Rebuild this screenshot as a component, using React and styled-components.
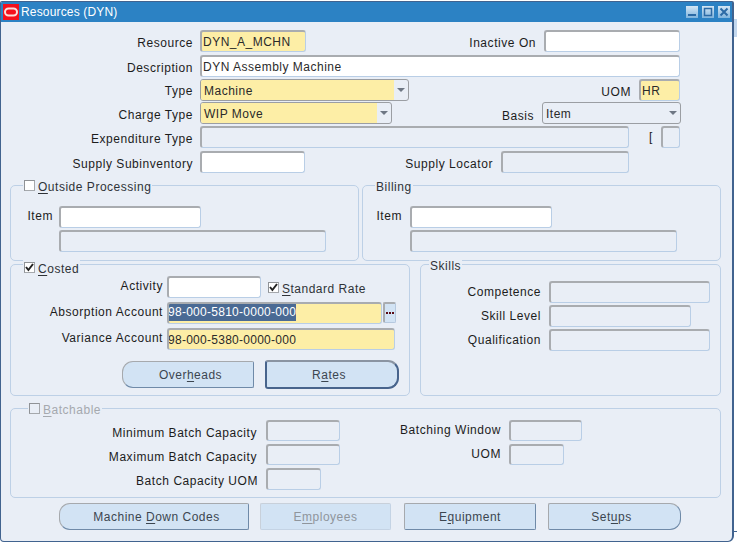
import React from "react";
import styled, { createGlobalStyle } from "styled-components";

const Global = createGlobalStyle`
  html, body { margin: 0; padding: 0; background: #fff; }
  body { font-family: "Liberation Sans", Arial, sans-serif; font-size: 12px; color: #1a1a1a; }
`;

const Page = styled.div`
  width: 737px; height: 544px; box-sizing: border-box; padding: 1px 0 0 0; overflow: hidden; display: flex;
`;
const Win = styled.div`
  width: 734px; height: 541px; flex: none; box-sizing: border-box;
  border: 1px solid #41638f; border-right-width: 2px;
  border-radius: 2px 2px 6px 4px; background: #e9eef6; display: flex; flex-direction: column; overflow: hidden;
`;
const Edge = styled.div`
  flex: 1; display: flex; flex-direction: column; padding-top: 18px;
`;
const EdgeTab = styled.div` height: 18px; background: #c4d8ee; `;
const EdgeLine = styled.div` height: 1px; margin-top: 494px; background: #41638f; `;
const TitleBar = styled.div`
  height: 20px; flex: none; background: #2c82c4; color: #fff; display: flex; align-items: center;
  font-size: 12px; letter-spacing: 0.16px; padding-left: 2px;
`;
const Logo = styled.svg` width: 16px; height: 16px; flex: none; margin-right: 2px; `;
const WinButtons = styled.div` margin-left: auto; display: flex; gap: 4px; padding-right: 2px; `;
const WinBtn = styled.svg` width: 12px; height: 12px; display: block; `;

const Body = styled.div`
  flex: 1; display: flex; flex-direction: column; padding: 8px 0 0 9px;
`;
const Row = styled.div`
  display: flex; align-items: flex-start; height: ${p => p.$h || 22}px; margin-top: ${p => p.$mt || 0}px;
`;
const Label = styled.label`
  flex: none; width: ${p => p.$w}px; margin-right: ${p => p.$gap ?? 8}px; text-align: right;
  white-space: nowrap; line-height: ${p => 22 + 2 * (p.$dy ?? 2)}px; font-size: 12px; letter-spacing: 0.55px; color: #1c1c1c;
`;
const Field = styled.div`
  flex: none; box-sizing: border-box; width: ${p => p.$w}px; height: ${p => p.$h || 22}px; margin-left: ${p => p.$ml || 0}px;
  background: ${p => (p.$tone === "req" ? "#fdeea6" : p.$tone === "ro" ? "#e9eef6" : "#ffffff")};
  border: 1px solid #b9cee6; border-top: 2px solid #a9acb0; border-left: 2px solid #a9acb0; border-radius: 3px;
  padding-left: 1px; font-size: 12px; letter-spacing: 0.5px; line-height: 20px; white-space: nowrap; overflow: hidden;
  color: #2a2a2a;
`;
const SelectBox = styled.div`
  flex: none; box-sizing: border-box; width: ${p => p.$w}px; height: 22px;
  border: 1px solid #9b9ea3; border-radius: 3px; display: flex; background: #e9eef6; overflow: hidden;
`;
const SelectValue = styled.div`
  flex: 1; background: ${p => (p.$plain ? "transparent" : "#fdeea6")}; padding-left: 3px; letter-spacing: 0.5px; line-height: 22px; color: #2a2a2a;
`;
const SelectArrow = styled.div`
  flex: none; width: 14px; position: relative;
  &::after { content: ""; position: absolute; left: 3px; top: 8px; border-left: 4px solid transparent; border-right: 4px solid transparent; border-top: 4px solid #6e7784; }
`;
const Bracket = styled.span` flex: none; width: 12px; margin-left: 20px; line-height: 22px; `;
const Selected = styled.span`
  display: inline-block; margin-left: -2px; background: #4a6a94; color: #fff; letter-spacing: 0.27px; line-height: 17px; vertical-align: top;
`;
const Account = styled.span` margin-left: -2px; letter-spacing: 0.27px; `;
const RateText = styled.span` letter-spacing: 0.5px; line-height: 26px; color: #2f3338; `;

const Two = styled.div` display: flex; margin-top: ${p => p.$mt || 0}px; `;
const Group = styled.div`
  flex: none; box-sizing: border-box; width: ${p => p.$w}px; height: ${p => p.$h}px; margin-left: ${p => p.$ml || 0}px;
  border: 1px solid #bdd0e6; border-radius: 5px; position: relative; display: flex; flex-direction: column;
  padding-top: ${p => p.$pt || 0}px;
`;
const Legend = styled.div`
  position: absolute; left: ${p => p.$l ?? 12}px; top: ${p => p.$t ?? -8}px; background: #e9eef6; display: flex; align-items: center;
  height: 15px; padding: 0 1px; letter-spacing: 0.52px; color: ${p => (p.$off ? "#a5a9ae" : "#2f3338")};
`;
const LegendText = styled.span` padding-top: ${p => p.$dy ?? 2}px; `;
const Check = styled.span`
  flex: none; box-sizing: border-box; width: 11px; height: 11px; border: 1px solid #a5a8ac; border-top-color: #8f9296; border-left-color: #8f9296;
  background: ${p => (p.$off ? "#e9eef6" : "#fff")}; margin: ${p => p.$mt || 0}px 3px 0 ${p => p.$ml || 0}px; display: inline-flex;
  align-items: center; justify-content: center;
`;
const U = styled.span` text-decoration: underline; text-underline-offset: 2px; `;

const Btn = styled.div`
  flex: none; box-sizing: border-box; width: ${p => p.$w}px; height: ${p => p.$h || 27}px; margin-left: ${p => p.$ml || 0}px;
  margin-top: ${p => p.$mt || 0}px;
  background: #d2e3f4; display: flex; align-items: center; justify-content: center;
  padding-left: ${p => Math.max(p.$dx || 0, 0) * 2}px; padding-right: ${p => Math.max(-(p.$dx || 0), 0) * 2}px;
  border: 1px solid ${p => (p.$off ? "#c4d3e4" : "#6f8aa8")};
  border-top-color: ${p => (p.$off ? "#c8d0da" : "#a6a9ad")}; border-left-color: ${p => (p.$off ? "#c8d0da" : "#a6a9ad")};
  border-radius: ${p => (p.$shape === "left" ? "11px 2px 2px 11px" : p.$shape === "right" ? "2px 11px 11px 2px" : "2px")};
  letter-spacing: 0.5px; color: ${p => (p.$off ? "#8f959c" : "#3c4650")};
  ${p => p.$active && "border: 2px solid #48648c; border-top-color: #8a94a2; border-radius: 3px 11px 11px 3px;"}
`;
const Dots = styled.div`
  flex: none; box-sizing: border-box; width: 13px; height: 21px; margin-left: 1px; background: #d2e3f4;
  border: 1px solid #b5c8de; border-top: 2px solid #a9acb0; border-left: 2px solid #a9acb0; border-radius: 2px;
  display: flex; align-items: center; justify-content: center; gap: 1px;
  i { width: 2px; height: 2px; background: #5a0a14; display: block; }
`;

const Tick = () => (
  <svg width="9" height="9" viewBox="0 0 9 9"><path d="M1 4 L3.4 7 L8 1" fill="none" stroke="#222" strokeWidth="2" /></svg>
);

export default function App() {
  return (
    <Page>
      <Global />
      <Win>
        <TitleBar>
          <Logo viewBox="0 0 16 16">
            <rect width="16" height="16" fill="#f5101c" />
            <rect x="2" y="4.5" width="12" height="7" rx="3.5" fill="none" stroke="#fbdcd8" strokeWidth="2" />
          </Logo>
          Resources (DYN)
          <WinButtons>
            <WinBtn viewBox="0 0 12 12"><defs><linearGradient id="wb" x1="0" y1="0" x2="0" y2="1"><stop offset="0" stopColor="#d5e6f4" /><stop offset="1" stopColor="#7fb4dd" /></linearGradient></defs><rect width="12" height="12" fill="url(#wb)" /><rect x="2" y="8" width="8" height="2" fill="#2c6aa5" /></WinBtn>
            <WinBtn viewBox="0 0 12 12"><rect width="12" height="12" fill="url(#wb)" /><rect x="2.5" y="2.5" width="7" height="7" fill="none" stroke="#2c6aa5" strokeWidth="1.5" /></WinBtn>
            <WinBtn viewBox="0 0 12 12"><rect width="12" height="12" fill="url(#wb)" /><path d="M2.5 2.5 L9.5 9.5 M9.5 2.5 L2.5 9.5" stroke="#2c6aa5" strokeWidth="2" /></WinBtn>
          </WinButtons>
        </TitleBar>
        <Body>
          <Row>
            <Label $w={183} $gap={7}>Resource</Label>
            <Field $w={106} $tone="req">DYN_A_MCHN</Field>
            <Label $w={230}>Inactive On</Label>
            <Field $w={136} />
          </Row>
          <Row $mt={3}>
            <Label $w={183} $gap={7}>Description</Label>
            <Field $w={480}>DYN Assembly Machine</Field>
          </Row>
          <Row $mt={2}>
            <Label $w={183} $gap={7} $dy={1}>Type</Label>
            <SelectBox $w={209}><SelectValue>Machine</SelectValue><SelectArrow /></SelectBox>
            <Label $w={222} $dy={2}>UOM</Label>
            <Field $w={41} $tone="req">HR</Field>
          </Row>
          <Row $mt={1}>
            <Label $w={183} $gap={7} $dy={2}>Charge Type</Label>
            <SelectBox $w={192}><SelectValue>WIP Move</SelectValue><SelectArrow /></SelectBox>
            <Label $w={142} $dy={3}>Basis</Label>
            <SelectBox $w={139}><SelectValue $plain>Item</SelectValue><SelectArrow /></SelectBox>
          </Row>
          <Row $mt={2}>
            <Label $w={183} $gap={7}>Expenditure Type</Label>
            <Field $w={429} $tone="ro" />
            <Bracket>[</Bracket>
            <Field $w={19} $tone="ro" />
          </Row>
          <Row $mt={3}>
            <Label $w={183} $gap={7}>Supply Subinventory</Label>
            <Field $w={105} />
            <Label $w={188}>Supply Locator</Label>
            <Field $w={128} $tone="ro" />
          </Row>
          <Two $mt={12}>
            <Group $w={349} $h={76} $pt={20}>
              <Legend><Check /><LegendText><U>O</U>utside Processing</LegendText></Legend>
              <Row><Label $w={42} $gap={6} $dy={-1}>Item</Label><Field $w={142} /></Row>
              <Row $mt={2}><Field $w={267} $ml={48} $tone="ro" /></Row>
            </Group>
            <Group $w={359} $h={76} $ml={3} $pt={20}>
              <Legend><LegendText>Billing</LegendText></Legend>
              <Row><Label $w={39} $dy={-1}>Item</Label><Field $w={142} /></Row>
              <Row $mt={2}><Field $w={267} $ml={47} $tone="ro" /></Row>
            </Group>
          </Two>
          <Two $mt={3}>
            <Group $w={400} $h={132} $pt={11}>
              <Legend $t={-5}><Check><Tick /></Check><LegendText><U>C</U>osted</LegendText></Legend>
              <Row>
                <Label $w={152} $gap={4} $dy={-1}>Activity</Label>
                <Field $w={94} />
                <Check $ml={7} $mt={6}><Tick /></Check>
                <RateText><U>S</U>tandard Rate</RateText>
              </Row>
              <Row $mt={4}>
                <Label $w={152} $gap={4} $dy={-1}>Absorption Account</Label>
                <Field $w={215} $tone="req"><Selected>98-000-5810-0000-000</Selected></Field>
                <Dots><i /><i /><i /></Dots>
              </Row>
              <Row $mt={4}>
                <Label $w={152} $gap={4} $dy={-1}>Variance Account</Label>
                <Field $w={228} $tone="req"><Account>98-000-5380-0000-000</Account></Field>
              </Row>
              <Row $h={29} $mt={10}>
                <Btn $w={132} $ml={111} $mt={1} $shape="left" $dx={2.5}><span>Over<U>h</U>eads</span></Btn>
                <Btn $w={134} $h={29} $ml={11} $active $dx={-3}><span>R<U>a</U>tes</span></Btn>
              </Row>
            </Group>
            <Group $w={301} $h={132} $ml={10} $pt={16}>
              <Legend $l={8} $t={-7} ><LegendText $dy={0}>Skills</LegendText></Legend>
              <Row><Label $w={120} $dy={0}>Competence</Label><Field $w={161} $tone="ro" /></Row>
              <Row $mt={2}><Label $w={120} $dy={0}>Skill Level</Label><Field $w={142} $tone="ro" /></Row>
              <Row $mt={2}><Label $w={120} $dy={0}>Qualification</Label><Field $w={161} $tone="ro" /></Row>
            </Group>
          </Two>
          <Two $mt={12}>
            <Group $w={711} $h={90} $pt={11}>
              <Legend $off $l={17}><Check $off /><LegendText><U>B</U>atchable</LegendText></Legend>
              <Row $h={21}>
                <Label $w={246} $gap={9} $dy={2.5}>Minimum Batch Capacity</Label>
                <Field $w={74} $h={21} $tone="ro" />
                <Label $w={161} $dy={-0.5}>Batching Window</Label>
                <Field $w={73} $h={21} $tone="ro" />
              </Row>
              <Row $h={21} $mt={3}>
                <Label $w={246} $gap={9} $dy={2.5}>Maximum Batch Capacity</Label>
                <Field $w={74} $h={21} $tone="ro" />
                <Label $w={161} $dy={-0.5}>UOM</Label>
                <Field $w={55} $h={21} $tone="ro" />
              </Row>
              <Row $mt={3}>
                <Label $w={247} $dy={2}>Batch Capacity UOM</Label>
                <Field $w={55} $tone="ro" />
              </Row>
            </Group>
          </Two>
          <Row $h={27} $mt={5}>
            <Btn $w={190} $ml={49} $shape="left" $dx={2.5}><span>Machine <U>D</U>own Codes</span></Btn>
            <Btn $w={131} $ml={11} $off><span>E<U>m</U>ployees</span></Btn>
            <Btn $w={132} $ml={13}><span>E<U>q</U>uipment</span></Btn>
            <Btn $w={133} $ml={12} $shape="right" $dx={-3}><span>Set<U>u</U>ps</span></Btn>
          </Row>
        </Body>
      </Win>
      <Edge><EdgeTab /><EdgeLine /></Edge>
    </Page>
  );
}
